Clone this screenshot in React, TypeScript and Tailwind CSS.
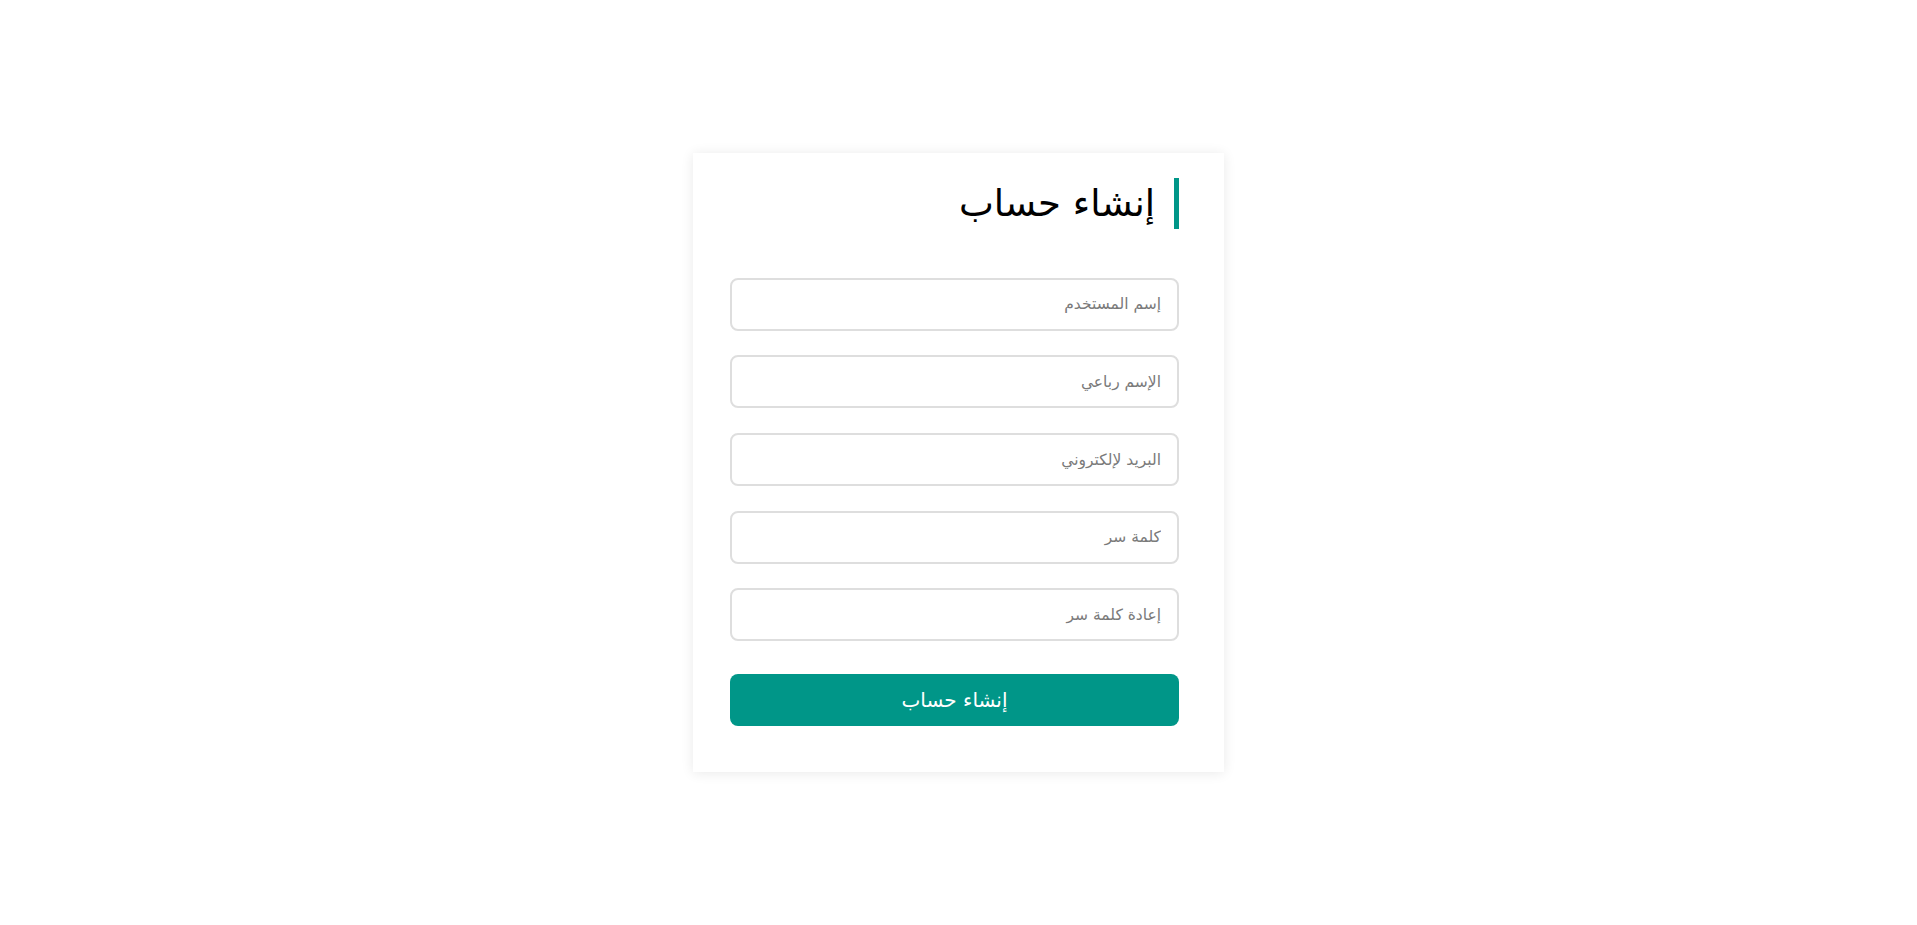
import { useState } from 'react';

const fields = [
  { name: 'username', type: 'text', placeholder: 'إسم المستخدم' },
  { name: 'fullname', type: 'text', placeholder: 'الإسم رباعي' },
  { name: 'email', type: 'email', placeholder: 'البريد لإلكتروني' },
  { name: 'password', type: 'password', placeholder: 'كلمة سر' },
  { name: 'confirm', type: 'password', placeholder: 'إعادة كلمة سر' },
];

export default function App() {
  const [values, setValues] = useState<Record<string, string>>({});

  return (
    <div
      dir="rtl"
      className="min-h-screen w-full bg-white flex items-center justify-center font-['DejaVu_Sans',sans-serif]"
    >
      {/* Register card */}
      <div className="w-[531px] bg-white shadow-[0_1px_12px_rgba(0,0,0,0.09)] pt-[25px] pb-[46px] pr-[45px] pl-[37px]">
        <h1 className="border-r-[5px] border-[#009688] pr-[19px] h-[51px] flex items-center text-[37px] leading-none text-black">
          إنشاء حساب
        </h1>

        <form onSubmit={(e) => e.preventDefault()} className="mt-[49px] flex flex-col">
          <div className="flex flex-col gap-[24.7px]">
            {fields.map((f) => (
              <input
                key={f.name}
                type={f.type}
                value={values[f.name] ?? ''}
                onChange={(e) => setValues({ ...values, [f.name]: e.target.value })}
                placeholder={f.placeholder}
                className="w-full h-[53px] rounded-lg border-2 border-[#dedede] bg-white px-4 text-[15.5px] text-gray-800 placeholder:text-[#7a7a7a] focus:outline-none focus:border-[#009688]"
              />
            ))}
          </div>
          <button
            type="submit"
            className="mt-[33px] h-[52px] w-full rounded-lg bg-[#009688] text-white text-[20px]"
          >
            إنشاء حساب
          </button>
        </form>
      </div>
    </div>
  );
}
